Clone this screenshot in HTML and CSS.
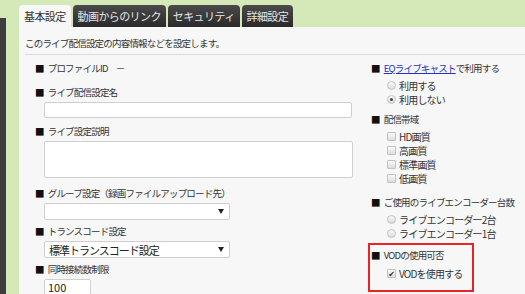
FILE: index.html
```html
<!DOCTYPE html>
<html lang="ja">
<head>
  <meta charset="UTF-8">
  <title>ライブ配信設定</title>
  <link rel="stylesheet" href="styles.css">
</head>
<body>
  <div class="page">
    <div class="side"></div>
    <div class="main">
      <!-- tabs -->
      <ul class="tabs">
        <li class="tab active">基本設定</li>
        <li class="tab">動画からのリンク</li>
        <li class="tab">セキュリティ</li>
        <li class="tab">詳細設定</li>
      </ul>

      <div class="panel">
        <p class="lead">このライブ配信設定の内容情報などを設定します。</p>

        <div class="cols">
          <div class="col left">
            <div class="row first">
              <p class="label">プロファイルID<span class="dash">－</span></p>
            </div>
            <div class="row r2">
              <p class="label">ライブ配信設定名</p>
              <div class="input wide"></div>
            </div>
            <div class="row r3">
              <p class="label">ライブ設定説明</p>
              <div class="textarea"></div>
            </div>
            <div class="row r4">
              <p class="label">グループ設定（録画ファイルアップロード先）</p>
              <div class="select"><span></span><i class="arrow"></i></div>
            </div>
            <div class="row r5">
              <p class="label">トランスコード設定</p>
              <div class="select"><span>標準トランスコード設定</span><i class="arrow"></i></div>
            </div>
            <div class="row r5">
              <p class="label">同時接続数制限</p>
              <div class="input short">100</div>
            </div>
          </div>

          <div class="col right">
            <div class="row first">
              <p class="label"><a href="#">EQライブキャスト</a>で利用する</p>
              <div class="opts">
                <div class="opt"><span class="radio"></span>利用する</div>
                <div class="opt"><span class="radio on"></span>利用しない</div>
              </div>
            </div>
            <div class="row">
              <p class="label">配信帯域</p>
              <div class="opts">
                <div class="opt"><span class="check"></span>HD画質</div>
                <div class="opt"><span class="check"></span>高画質</div>
                <div class="opt"><span class="check"></span>標準画質</div>
                <div class="opt"><span class="check"></span>低画質</div>
              </div>
            </div>
            <div class="row encoder">
              <p class="label">ご使用のライブエンコーダー台数</p>
              <div class="opts">
                <div class="opt"><span class="radio"></span>ライブエンコーダー2台</div>
                <div class="opt"><span class="radio"></span>ライブエンコーダー1台</div>
              </div>
            </div>
            <div class="highlight">
              <p class="label">VODの使用可否</p>
              <div class="opts">
                <div class="opt"><span class="check on">✔</span>VODを使用する</div>
              </div>
            </div>
          </div>
        </div>
      </div>
    </div>
  </div>
</body>
</html>
```

FILE: styles.css
```css
body {
  margin: 0;
  font-family: "Noto Sans CJK JP", "DejaVu Sans", sans-serif;
  font-size: 9.5px;
  letter-spacing: -0.8px;
  color: #333;
  background: #d4e8b8;
  overflow: hidden;
  white-space: nowrap;
}
p {
  margin: 0;
}
.page {
  display: flex;
  height: 294px;
}
.side {
  width: 6px;
  margin-top: 18px;
  background: #3d3d3d;
}
.main {
  flex: 1;
  padding: 5px 0 0 13px;
  display: flex;
  flex-direction: column;
}

/* tabs */
.tabs {
  list-style: none;
  margin: 0;
  padding: 0;
  display: flex;
  gap: 2px;
  height: 22px;
}
.tab {
  padding: 0 5px;
  line-height: 23px;
  font-size: 11px;
  letter-spacing: -0.6px;
  color: #e6e6e6;
  background: linear-gradient(#4a4a4a, #2a2a2a);
  border-radius: 4px 4px 0 0;
}
.tab.active {
  color: #333;
  background: #f7f7f7;
}

.panel {
  flex: 1;
  background: #f7f7f7;
  padding: 0 0 0 6px;
}
.lead {
  line-height: 16px;
  padding-top: 8px;
  padding-bottom: 3px;
  border-bottom: 1px solid #dcdcdc;
}

.cols {
  display: grid;
  grid-template-columns: 336px 1fr;
  padding-left: 10px;
}
.label {
  line-height: 14px;
}
.label::before {
  content: "■";
  color: #111;
  margin-right: 4px;
}
.label a {
  color: #2233cc;
}
.dash {
  margin-left: 8px;
}

/* left column */
.left .row.first {
  margin-top: 6px;
}
.left .r2 {
  margin-top: 10px;
}
.left .r3 {
  margin-top: 6px;
}
.left .r4 {
  margin-top: 8px;
}
.left .r5 {
  margin-top: 4px;
}
.input,
.textarea,
.select {
  margin: 3px 0 0 9px;
  background: #fff;
  border: 1px solid #cfcfcf;
  border-radius: 2px;
  box-sizing: border-box;
}
.input {
  height: 16px;
  line-height: 14px;
  padding-left: 3px;
  font-size: 11px;
  letter-spacing: 0;
  color: #222;
}
.input.wide {
  width: 308px;
}
.input.short {
  width: 47px;
}
.textarea {
  width: 309px;
  height: 37px;
}
.select {
  width: 186px;
  height: 17px;
  display: flex;
  align-items: center;
  justify-content: space-between;
  padding: 0 5px 0 4px;
  font-size: 11px;
  letter-spacing: -1px;
  color: #222;
}
.arrow {
  width: 0;
  height: 0;
  border-left: 3px solid transparent;
  border-right: 3px solid transparent;
  border-top: 5px solid #222;
}

/* right column */
.right .row.first {
  margin-top: 6px;
}
.right .row {
  margin-top: 5px;
}
.right .row.encoder {
  margin-top: 9px;
}
.opts {
  padding: 3px 0 1px 16px;
}
.opt {
  display: flex;
  align-items: center;
  height: 14px;
  font-size: 10px;
}
.radio,
.check {
  width: 9px;
  height: 9px;
  box-sizing: border-box;
  margin-right: 3px;
  background: linear-gradient(#fafafa, #dcdcdc);
  border: 1px solid #c2c2c2;
}
.radio {
  border-radius: 50%;
  position: relative;
}
.radio.on::after {
  content: "";
  position: absolute;
  left: 2px;
  top: 2px;
  width: 3px;
  height: 3px;
  border-radius: 50%;
  background: #444;
}
.check {
  border-radius: 1px;
  font-size: 8px;
  line-height: 8px;
  letter-spacing: 0;
  text-align: center;
  color: #333;
}
.highlight {
  margin: 2px 0 0 -3px;
  width: 106px;
  height: 49px;
  box-sizing: border-box;
  border: 2px solid #e82525;
  padding: 3px 0 0 1px;
}
.highlight .opts {
  padding-top: 4px;
}
```
